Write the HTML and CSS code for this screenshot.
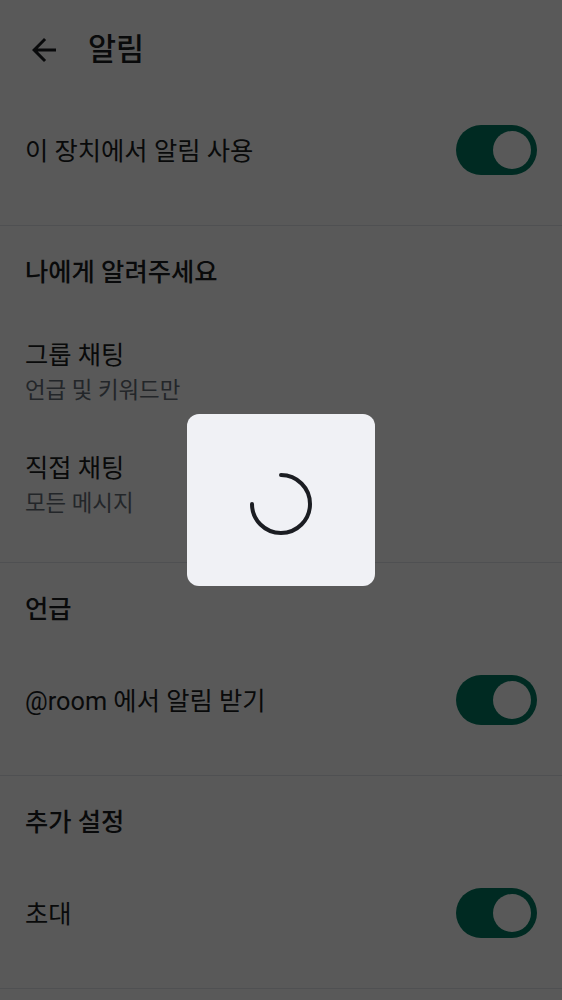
FILE: index.html
```html
<!DOCTYPE html>
<html lang="ko">
<head>
<meta charset="utf-8">
<link rel="stylesheet" href="styles.css">
</head>
<body>
<div class="page">
  <header class="toolbar">
    <svg class="back" viewBox="0 0 24 24" width="36" height="36"><path d="M20 11H7.83l5.59-5.59L12 4l-8 8 8 8 1.41-1.41L7.83 13H20v-2z"/></svg>
    <h1 class="title">알림</h1>
  </header>

  <section class="section first">
    <div class="row">
      <span class="label">이 장치에서 알림 사용</span>
      <span class="switch"><span class="thumb"></span></span>
    </div>
  </section>

  <section class="section mid">
    <div class="sec-head">나에게 알려주세요</div>
    <div class="row two">
      <div class="texts">
        <span class="label">그룹 채팅</span>
        <span class="sub">언급 및 키워드만</span>
      </div>
    </div>
    <div class="row two">
      <div class="texts">
        <span class="label">직접 채팅</span>
        <span class="sub">모든 메시지</span>
      </div>
    </div>
  </section>

  <section class="section">
    <div class="sec-head">언급</div>
    <div class="row">
      <span class="label">@room 에서 알림 받기</span>
      <span class="switch"><span class="thumb"></span></span>
    </div>
  </section>

  <section class="section">
    <div class="sec-head">추가 설정</div>
    <div class="row">
      <span class="label">초대</span>
      <span class="switch"><span class="thumb"></span></span>
    </div>
  </section>
</div>

<div class="scrim">
  <div class="dialog">
    <svg class="spinner" viewBox="0 0 64 64" width="64" height="64">
      <path d="M32 3 A29 29 0 1 1 3 32" fill="none" stroke="#1b1d22" stroke-width="4" stroke-linecap="round"/>
    </svg>
  </div>
</div>
</body>
</html>
```

FILE: styles.css
```css
* { box-sizing: border-box; }
html, body { margin: 0; padding: 0; }
body {
  background: #ffffff;
  font-family: Roboto, "Noto Sans CJK KR", sans-serif;
  color: #1b1d22;
  width: 562px;
  height: 1000px;
  overflow: hidden;
}
.page { width: 562px; }

.toolbar {
  height: 100px;
  display: flex;
  align-items: center;
  padding-left: 26px;
}
.back { fill: #1b1d22; flex: none; }
.title {
  margin: 0 0 0 26px;
  font-size: 30.5px;
  font-weight: 500;
  line-height: 1;
}

.section {
  border-bottom: 1px solid #e1e6ec;
  padding-bottom: 25px;
}
.section.first { padding-bottom: 25px; }
.section.mid { padding-bottom: 23px; }

.sec-head {
  height: 87px;
  display: flex;
  align-items: center;
  padding-left: 25px;
  font-size: 25.3px;
  font-weight: 500;
}

.row {
  height: 100px;
  display: flex;
  align-items: center;
  justify-content: space-between;
  padding: 0 25px 0 25px;
}
.row > .label { padding-top: 4px; }
.row.two { height: 113px; padding-top: 7px; }
.texts { display: flex; flex-direction: column; }
.label { font-size: 25.3px; line-height: 34px; }
.sub { font-size: 22.4px; line-height: 34px; color: #656d77; }

.switch {
  width: 81px;
  height: 50px;
  border-radius: 25px;
  background: #007a61;
  display: flex;
  align-items: center;
  justify-content: flex-end;
  padding-right: 6px;
  flex: none;
}
.thumb {
  width: 38px;
  height: 38px;
  border-radius: 50%;
  background: #ffffff;
}

.scrim {
  position: fixed;
  inset: 0;
  background: rgba(0, 0, 0, 0.65);
  display: flex;
  align-items: center;
  justify-content: center;
}
.dialog {
  width: 188px;
  height: 172px;
  background: #f0f1f5;
  border-radius: 12px;
  display: flex;
  align-items: center;
  justify-content: center;
}
.spinner { display: block; margin-top: 8px; }
```
